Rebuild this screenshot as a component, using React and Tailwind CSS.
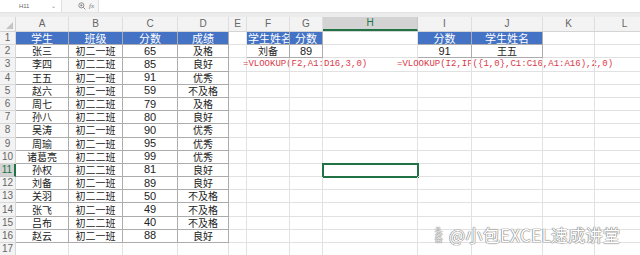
import React from "react";

const cols = [
  { k: "A", w: 53 },
  { k: "B", w: 54 },
  { k: "C", w: 55 },
  { k: "D", w: 51 },
  { k: "E", w: 18 },
  { k: "F", w: 43 },
  { k: "G", w: 33 },
  { k: "H", w: 95 },
  { k: "I", w: 54 },
  { k: "J", w: 71 },
  { k: "K", w: 52 },
  { k: "L", w: 60 },
];

const students = [
  ["张三", "初二一班", "65", "及格"],
  ["李四", "初二二班", "85", "良好"],
  ["王五", "初二一班", "91", "优秀"],
  ["赵六", "初二一班", "59", "不及格"],
  ["周七", "初二二班", "79", "及格"],
  ["孙八", "初二二班", "80", "良好"],
  ["吴涛", "初二一班", "90", "优秀"],
  ["周瑜", "初二一班", "95", "优秀"],
  ["诸葛亮", "初二二班", "99", "优秀"],
  ["孙权", "初二二班", "81", "良好"],
  ["刘备", "初二一班", "89", "良好"],
  ["关羽", "初二二班", "50", "不及格"],
  ["张飞", "初二一班", "49", "不及格"],
  ["吕布", "初二二班", "40", "不及格"],
  ["赵云", "初二一班", "88", "良好"],
];

const CJK = "font-['SimSun','Noto_Sans_CJK_SC',sans-serif]";
const NUM = "font-['Liberation_Sans','Noto_Sans_CJK_SC',sans-serif]";

// returns {text, kind} for a cell
function cellInfo(r, k) {
  const ai = "ABCD".indexOf(k);
  if (r === 1) {
    const head = { A: "学生", B: "班级", C: "分数", D: "成绩", F: "学生姓名", G: "分数", I: "分数", J: "学生姓名" };
    if (head[k]) return { text: head[k], kind: "head", left: k === "F" };
    return null;
  }
  if (r >= 2 && r <= 16 && ai >= 0) {
    return { text: students[r - 2][ai], kind: "data" };
  }
  if (r === 2) {
    const m = { F: "刘备", G: "89", I: "91", J: "王五" };
    if (m[k]) return { text: m[k], kind: "data" };
  }
  return null;
}

function inTable(r, k) {
  if (r >= 1 && r <= 16 && "ABCD".includes(k)) return true;
  if (r >= 1 && r <= 2 && "FGIJ".includes(k)) return true;
  return false;
}

function Cell({ r, c }) {
  const info = cellInfo(r, c.k);
  const table = inTable(r, c.k);
  const selected = r === 11 && c.k === "H";
  const isNum = info && /^\d+$/.test(info.text);

  let cls = "shrink-0 h-full flex items-center border-r border-b whitespace-nowrap ";
  cls += table ? "border-[#acacac] " : "border-[#e1e1e1] ";
  if (info && info.kind === "head") cls += "bg-[#4472c4] text-white ";
  else cls += "text-[#222] ";
  if (selected) cls += "outline-2 outline-[#217346] -outline-offset-1 bg-white ";

  let content = null;
  if (info) {
    cls += info.left ? "overflow-hidden justify-start pl-[1px] " : "justify-center ";
    const size = info.kind === "head" ? "text-[11px]" : "text-[10px]";
    content = (
      <span className={isNum ? `${NUM} text-[11px] leading-none` : `${CJK} ${size} leading-none`}>{info.text}</span>
    );
  }
  if (r === 3 && c.k === "E") {
    content = (
      <span className="pl-[14px] leading-none font-['Liberation_Mono',monospace] text-[9px] text-[#d83a4a]">
        =VLOOKUP(F2,A1:D16,3,0)
      </span>
    );
  }
  if (r === 3 && c.k === "H") {
    content = (
      <span className="pl-[74px] leading-none font-['Liberation_Mono',monospace] text-[9px] text-[#d83a4a]">
        =VLOOKUP(I2,IF({"{"}1,0{"}"},C1:C16,A1:A16),2,0)
      </span>
    );
  }

  return (
    <div className={cls} style={{ width: c.w }}>
      {content}
    </div>
  );
}

export default function App() {
  const rows = Array.from({ length: 17 }, (_, i) => i + 1);
  return (
    <div className="w-[640px] h-[255px] overflow-hidden bg-white relative font-['Liberation_Sans',sans-serif]">
      {/* formula bar */}
      <div className="h-[13px] flex items-stretch bg-[#f6f6f6] border-b border-[#e4e4e4]">
        <div className="w-[62px] flex items-center bg-white border-r border-[#e0e0e0] pl-[19px] pr-[5px]">
          <span className="text-[6px] leading-none text-[#666] tracking-tight">H11</span>
          <span className="ml-auto text-[6px] leading-none text-[#888]">⌄</span>
        </div>
        <div className="w-[36px] flex items-center gap-[3px] pl-[16px] text-[#777]">
          <svg width="8" height="8" viewBox="0 0 10 10" fill="none" stroke="currentColor" strokeWidth="1">
            <circle cx="4.2" cy="4.2" r="3.2" />
            <path d="M6.6 6.6 9.2 9.2M2.8 4.2h2.8M4.2 2.8v2.8" />
          </svg>
          <span className="italic text-[7px] leading-none font-['Liberation_Serif',serif]">fx</span>
        </div>
        <div className="flex-1 bg-white border-l border-[#e0e0e0]" />
      </div>
      <div className="h-[4px] bg-[#ececec]" />

      {/* column headers */}
      <div className="h-[15px] flex bg-[#f3f3f3] border-b border-[#d4d4d4]">
        <div className="w-[16px] shrink-0 flex items-end justify-end pr-[2px] pb-[2px] border-r border-[#d4d4d4]">
          <div className="w-0 h-0 border-l-[7px] border-l-transparent border-b-[7px] border-b-[#c4c4c4]" />
        </div>
        {cols.map((c) =>
          c.k === "H" ? (
            <div
              key={c.k}
              className="shrink-0 flex items-center justify-center bg-[#d3d3d3] border-b-2 border-[#217346] border-r border-r-[#c8c8c8] text-[10px] leading-none text-[#217346]"
              style={{ width: c.w }}
            >
              {c.k}
            </div>
          ) : (
            <div
              key={c.k}
              className="shrink-0 flex items-center justify-center border-r border-[#dedede] text-[10px] leading-none text-[#666]"
              style={{ width: c.w }}
            >
              {c.k}
            </div>
          )
        )}
      </div>

      {/* rows */}
      {rows.map((r) => (
        <div key={r} className="h-[13.2px] flex">
          {r === 11 ? (
            <div className="w-[16px] shrink-0 h-full flex items-center justify-center bg-[#d3d3d3] border-r-2 border-[#217346] border-b border-b-[#c8c8c8] text-[10px] leading-none text-[#217346]">
              {r}
            </div>
          ) : (
            <div className="w-[16px] shrink-0 h-full flex items-center justify-center bg-[#f3f3f3] border-r border-b border-[#d8d8d8] text-[10px] leading-none text-[#666]">
              {r}
            </div>
          )}
          {cols.map((c) => (
            <Cell key={c.k} r={r} c={c} />
          ))}
        </div>
      ))}

      {/* watermark overlay */}
      <div className="absolute left-[432px] top-[226px] flex items-center gap-[3px] text-white text-[17px] leading-none tracking-[0.3px] font-['Noto_Sans_CJK_SC',sans-serif] [text-shadow:0_0_1px_#777,0_0_1px_#777,0_0_1px_#777]">
        <span className="text-[8px] leading-[8px] w-[14px] text-center">头条</span>
        <span>@小包EXCEL速成讲堂</span>
      </div>
    </div>
  );
}
